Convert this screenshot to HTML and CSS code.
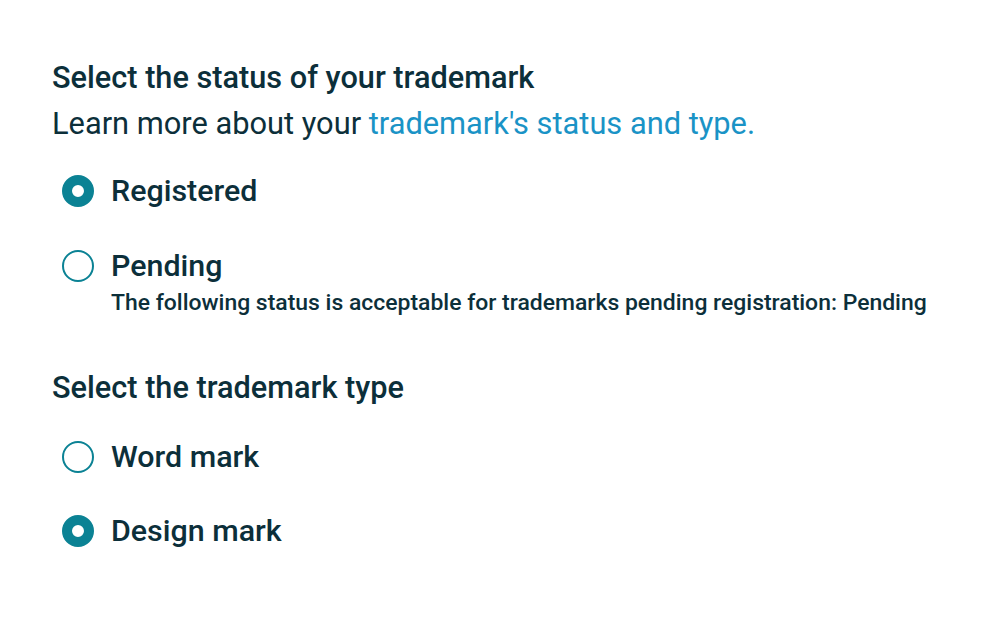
FILE: index.html
```html
<!DOCTYPE html>
<html>
<head>
<meta charset="utf-8">
<link rel="stylesheet" href="styles.css">
</head>
<body>
<main class="form">
  <fieldset class="group">
    <legend class="heading">Select the status of your trademark</legend>
    <p class="intro">Learn more about your <a class="link" href="#">trademark's status and type.</a></p>
    <div class="options options-status">
      <label class="option">
        <input type="radio" name="status" checked>
        <span class="radio"></span>
        <span class="label-text">Registered</span>
      </label>
      <label class="option">
        <input type="radio" name="status">
        <span class="radio"></span>
        <span class="label-body">
          <span class="label-text">Pending</span>
          <span class="hint">The following status is acceptable for trademarks pending registration: Pending</span>
        </span>
      </label>
    </div>
  </fieldset>
  <fieldset class="group group-type">
    <legend class="heading">Select the trademark type</legend>
    <div class="options options-type">
      <label class="option">
        <input type="radio" name="type">
        <span class="radio"></span>
        <span class="label-text">Word mark</span>
      </label>
      <label class="option">
        <input type="radio" name="type" checked>
        <span class="radio"></span>
        <span class="label-text">Design mark</span>
      </label>
    </div>
  </fieldset>
</main>
</body>
</html>
```
FILE: styles.css
```css
html, body {
  margin: 0;
  padding: 0;
  background: #ffffff;
}
body {
  font-family: Roboto, "Noto Sans", sans-serif;
  color: #0c2f3a;
}
.form {
  padding: 59px 52px 0 52px;
}
.group {
  border: 0;
  margin: 0;
  padding: 0;
  min-width: 0;
}
.heading {
  padding: 0;
  font-size: 30.7px;
  font-weight: 500;
  line-height: 38px;
}
.intro {
  margin: 8px 0 0 0;
  font-size: 30.8px;
  font-weight: 400;
  line-height: 38px;
}
.link {
  color: #1a93c6;
  text-decoration: none;
}
.options {
  display: flex;
  flex-direction: column;
  gap: 37px;
  margin-top: 29px;
  padding-left: 10px;
}
.options-type {
  margin-top: 31px;
  gap: 36px;
}
.option {
  display: flex;
  align-items: flex-start;
  gap: 17px;
  cursor: pointer;
}
.option input {
  position: absolute;
  opacity: 0;
  width: 0;
  height: 0;
}
.radio {
  flex: none;
  width: 32px;
  height: 32px;
  box-sizing: border-box;
  border-radius: 50%;
  border: 2px solid #0b8294;
  background: #ffffff;
  margin-top: 3px;
}
.option input:checked + .radio {
  border: 10px solid #0b8294;
}
.label-body {
  display: flex;
  flex-direction: column;
}
.label-text {
  font-size: 30.4px;
  font-weight: 500;
  line-height: 38px;
}
.hint {
  font-size: 22.95px;
  font-weight: 500;
  line-height: 32px;
  margin-top: 2px;
}
.group-type {
  margin-top: 50px;
}
```
